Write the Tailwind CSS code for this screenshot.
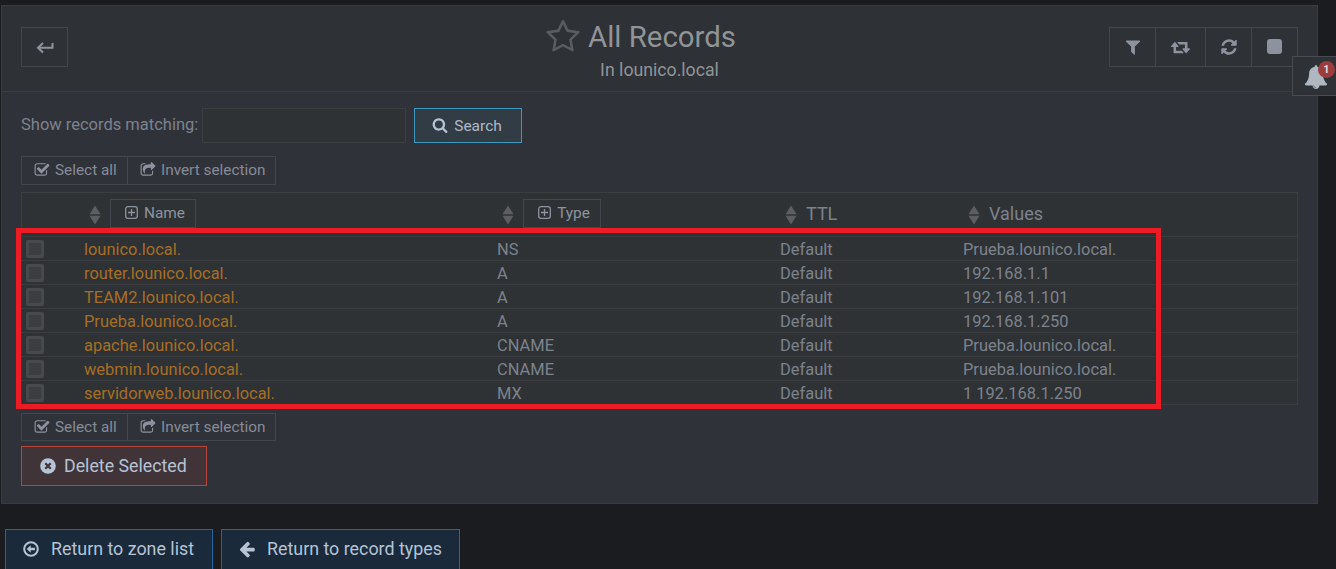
<!DOCTYPE html>
<html lang="en">
<head>
<meta charset="utf-8">
<title>All Records</title>
<script src="https://cdn.jsdelivr.net/npm/@tailwindcss/browser@4"></script>
</head>
<body class="relative h-[569px] w-[1336px] overflow-hidden bg-[#1b1c1f] font-['Roboto',sans-serif] text-[#7c828c]">
<svg class="hidden">
  <symbol id="filter" viewBox="0 0 1792 1792"><path d="M1595 295q17 41-14 70l-493 493v742q0 42-39 59-13 5-25 5-27 0-45-19l-256-256q-19-19-19-45v-486l-493-493q-31-29-14-70 17-39 59-39h1280q42 0 59 39z"/></symbol>
  <symbol id="retweet" viewBox="0 0 1920 1792"><path d="M1280 1504q0 13-9.500 22.500t-22.500 9.500h-960q-8 0-13.500-2t-9-7-5.500-8-3-11.500-1-11.500v-600h-192q-26 0-45-19t-19-45q0-24 15-41l320-384q19-22 49-22t49 22l320 384q15 17 15 41 0 26-19 45t-45 19h-192v384h576q16 0 25 11l160 192q7 10 7 21zm640-416q0 24-15 41l-320 384q-20 23-49 23t-49-23l-320-384q-15-17-15-41 0-26 19-45t45-19h192v-384h-576q-16 0-25-12l-160-192q-7-9-7-20 0-13 9.500-22.500t22.500-9.500h960q8 0 13.500 2t9 7 5.500 8 3 11.500 1 11.500v600h192q26 0 45 19t19 45z"/></symbol>
  <symbol id="refresh" viewBox="0 0 1792 1792"><path d="M1639 1056q0 5-1 7-64 268-268 434.500t-478 166.500q-146 0-282.500-55t-243.500-157l-129 129q-19 19-45 19t-45-19-19-45v-448q0-26 19-45t45-19h448q26 0 45 19t19 45-19 45l-137 137q71 66 161 102t187 36q134 0 250-65t186-179q11-17 53-117 8-23 30-23h192q13 0 22.500 9.500t9.500 22.500zm25-800v448q0 26-19 45t-45 19h-448q-26 0-45-19t-19-45 19-45l138-138q-148-137-349-137-134 0-250 65t-186 179q-11 17-53 117-8 23-30 23h-199q-13 0-22.500-9.500t-9.500-22.500v-7q65-268 270-434.500t480-166.500q146 0 284 55.500t245 156.500l130-129q19-19 45-19t45 19 19 45z"/></symbol>
  <symbol id="search" viewBox="0 0 1792 1792"><path d="M1216 832q0-185-131.500-316.500t-316.500-131.500-316.500 131.500-131.500 316.500 131.500 316.500 316.500 131.500 316.500-131.500 131.500-316.500zm512 832q0 52-38 90t-90 38q-54 0-90-38l-343-342q-179 124-399 124-143 0-273.500-55.500t-225-150-150-225-55.500-273.500 55.500-273.500 150-225 225-150 273.500-55.500 273.500 55.500 225 150 150 225 55.500 273.500q0 220-124 399l343 343q37 37 37 90z"/></symbol>
  <symbol id="check" viewBox="0 0 1792 1792"><path d="M1472 930v318q0 119-84.500 203.500t-203.500 84.500h-832q-119 0-203.500-84.500t-84.500-203.500v-832q0-119 84.500-203.500t203.500-84.500h832q63 0 117 25 15 7 18 23 3 17-9 29l-49 49q-10 10-23 10-3 0-9-2-23-6-45-6h-832q-66 0-113 47t-47 113v832q0 66 47 113t113 47h832q66 0 113-47t47-113v-254q0-13 9-22l64-64q10-10 23-10 6 0 12 3 20 8 20 29zm231-489l-814 814q-24 24-57 24t-57-24l-430-430q-24-24-24-57t24-57l110-110q24-24 57-24t57 24l263 263 647-647q24-24 57-24t57 24l110 110q24 24 24 57t-24 57z"/></symbol>
  <symbol id="share" viewBox="0 0 1792 1792"><path d="M1472 989v259q0 119-84.500 203.500t-203.500 84.500h-832q-119 0-203.500-84.500t-84.500-203.500v-832q0-119 84.500-203.500t203.500-84.500h255q13 0 22.500 9.500t9.500 22.500q0 27-26 32-77 26-133 60-10 4-16 4h-112q-66 0-113 47t-47 113v832q0 66 47 113t113 47h832q66 0 113-47t47-113v-214q0-19 18-29 28-13 54-37 16-16 35-8 21 9 21 29zm237-496l-384 384q-18 19-45 19-12 0-25-5-39-17-39-59v-192h-160q-323 0-438 131-119 137-74 473 3 23-20 34-8 2-12 2-16 0-26-13-10-14-21-31t-39.500-68.500-49.500-99.500-38.500-114-17.500-122q0-49 3.500-91t14-90 28-88 47-81.500 68.500-74 94.500-61.500 124.500-48.500 159.500-30.500 196.500-11h160v-192q0-42 39-59 13-5 25-5 26 0 45 19l384 384q19 19 19 45t-19 45z"/></symbol>
  <symbol id="star" viewBox="0 0 1792 1792"><path d="M1201 1004l306-297-422-62-189-382-189 382-422 62 306 297-73 421 378-199 377 199zm527-357q0 22-26 48l-363 354 86 500q1 7 1 20 0 50-41 50-19 0-40-12l-449-236-449 236q-22 12-40 12-21 0-31.500-14.500t-10.500-35.500q0-6 2-20l86-500-364-354q-25-27-25-48 0-37 56-46l502-73 225-455q19-41 49-41t49 41l225 455 502 73q56 9 56 46z"/></symbol>
  <symbol id="left" viewBox="0 0 1792 1792"><path d="M1664 896v128q0 53-32.500 90.500t-84.500 37.500h-704l293 294q38 36 38 90t-38 90l-75 76q-37 37-90 37-52 0-91-37l-651-652q-37-37-37-90 0-52 37-91l651-650q38-38 91-38 52 0 90 38l75 74q38 38 38 91t-38 91l-293 293h704q52 0 84.500 37.500t32.500 90.500z"/></symbol>
  <symbol id="bell" viewBox="0 0 1792 1792"><path d="M912 1696q0-16-16-16-59 0-101.500-42.500t-42.500-101.500q0-16-16-16t-16 16q0 73 51.500 124.500t124.500 51.500q16 0 16-16zm816-288q0 52-38 90t-90 38h-448q0 106-75 181t-181 75-181-75-75-181h-448q-52 0-90-38t-38-90q50-42 91-88t85-119.500 74.500-158.500 50-206 19.500-260q0-152 117-282.500t307-158.500q-8-19-8-39 0-40 28-68t68-28 68 28 28 68q0 20-8 39 190 28 307 158.500t117 282.500q0 139 19.500 260t50 206 74.500 158.500 85 119.500 91 88z"/></symbol>
  <symbol id="plus" viewBox="0 0 13 13"><path d="M3 .7h7a2.300 2.300 0 0 1 2.300 2.300v7a2.300 2.300 0 0 1-2.300 2.300H3A2.300 2.300 0 0 1 .7 10V3A2.300 2.300 0 0 1 3 .7zM6.500 3v7M3 6.500h7" fill="none" stroke="currentColor" stroke-width="1.300"/></symbol>
  <symbol id="sort" viewBox="0 0 12 20"><path d="M6 .5 11.500 9.200H.5zM6 19.500 11.500 10.800H.5z"/></symbol>
</svg>

<main class="ml-px mt-[5px] h-[499px] w-[1317px] border border-[#3b3c3f] bg-[#30323a]">
  <header class="flex h-[86px] justify-between border-b border-[#3b3c3f] bg-[#2e3135] pl-[19px] pr-[19px] pt-[21px]">
    <div class="w-[189px]">
      <button class="flex h-10 w-[47px] items-center justify-center border border-[#43464b] text-[#8d939e]">
        <svg class="mt-px h-[12px] w-[18px]" viewBox="0 0 18 12" fill="none" stroke="currentColor" stroke-width="2"><path d="M16.500 1v4.700H2M7 1 2 5.700l5 4.700"/></svg>
      </button>
    </div>
    <div class="-mt-[21px] flex flex-col items-center pt-[12px]">
      <h1 class="mr-[38px] flex h-[38px] items-center text-[29.4px] text-[#919497]">
        <svg class="mr-[7px] h-[36px] w-[36px] fill-[#595c60]"><use href="#star"/></svg><span>All Records</span>
      </h1>
      <p class="mt-[2px] text-[17.7px] leading-[25px] text-[#919497]"><span>In lounico.local</span></p>
    </div>
    <div class="flex h-10 w-[189px] border border-[#43464b] fill-[#8d939e] text-[#8d939e]">
      <div class="flex w-[46px] items-center justify-center border-r border-[#43464b]"><svg class="h-[18px] w-[18px]"><use href="#filter"/></svg></div>
      <div class="flex w-[50px] items-center justify-center border-r border-[#43464b]"><svg class="h-[18px] w-[19px]"><use href="#retweet"/></svg></div>
      <div class="flex w-[46px] items-center justify-center border-r border-[#43464b]"><svg class="-mt-px h-[18px] w-[18px]"><use href="#refresh"/></svg></div>
      <div class="flex grow items-center justify-center"><i class="-mt-px h-[15px] w-[15px] rounded-[3px] bg-[#8d939e]"></i></div>
    </div>
  </header>

  <section class="px-[19px] pt-[16px]">
    <div class="flex h-[35px] items-center">
      <label class="w-[181px] whitespace-nowrap text-[16.5px]"><span>Show records matching:</span></label>
      <div class="h-[35px] w-[204px] border border-[#3b3d40] bg-[#2f3235]"></div>
      <button class="ml-[8px] flex h-[35px] w-[108px] items-center justify-center border border-[#3a9bbe] bg-[#313c45] pr-[2px] text-[15.5px] text-[#aeb9c8]"><svg class="-mt-[2px] mr-[6px] h-4 w-4 fill-[#b5c3d5]"><use href="#search"/></svg><span class="pt-[2px]">Search</span></button>
    </div>

    <div class="mt-[13px] flex h-[29px] w-[255px] border border-[#43454f] fill-[#8d939e] text-[15.35px] text-[#868b95]">
      <div class="flex w-[106px] items-center border-r border-[#43454f] pl-[12px]"><svg class="-mt-[2px] mr-[5px] h-4 w-4"><use href="#check"/></svg><span>Select all</span></div>
      <div class="flex items-center pl-[12px]"><svg class="-mt-[2px] mr-[5px] h-4 w-4"><use href="#share"/></svg><span>Invert selection</span></div>
    </div>

    <div class="mt-[7px] h-[213px] w-[1277px] border border-[#3b3d40] bg-[#2f3235]">
      <div class="grid h-[43px] grid-cols-[413px_283px_183px_1fr] items-center text-lg">
        <div class="flex items-center pl-[67px]"><svg class="mr-[9px] h-5 w-3 fill-[#5c5e61]"><use href="#sort"/></svg>
          <div class="-mt-[3px] flex h-[29px] w-[86px] items-center justify-center border border-[#43454f] pl-[4px] text-[15.4px] text-[#8d939e]"><svg class="-mt-[2px] mr-[6px] h-[13px] w-[13px]"><use href="#plus"/></svg><span class="pt-[2px]">Name</span></div></div>
        <div class="flex items-center pl-[67px]"><svg class="mr-[9px] h-5 w-3 fill-[#5c5e61]"><use href="#sort"/></svg>
          <div class="-mt-[3px] flex h-[29px] w-[78px] items-center justify-center border border-[#43454f] pl-[4px] text-[15.4px] text-[#8d939e]"><svg class="-mt-[2px] mr-[6px] h-[13px] w-[13px]"><use href="#plus"/></svg><span class="pt-[2px]">Type</span></div></div>
        <div class="-mt-px flex items-center pl-[67px]"><svg class="mr-[9px] mt-[2px] h-5 w-3 fill-[#5c5e61]"><use href="#sort"/></svg><span>TTL</span></div>
        <div class="-mt-px flex items-center pl-[67px]"><svg class="mr-[9px] mt-[2px] h-5 w-3 fill-[#5c5e61]"><use href="#sort"/></svg><span>Values</span></div>
      </div>
      <div id="rows"></div>
    </div>

    <div class="mt-[8px] flex h-[28px] w-[255px] border border-[#43454f] fill-[#8d939e] text-[15.35px] text-[#868b95]">
      <div class="flex w-[106px] items-center border-r border-[#43454f] pl-[12px]"><svg class="-mt-px mr-[5px] h-4 w-4"><use href="#check"/></svg><span class="pt-px">Select all</span></div>
      <div class="flex items-center pl-[12px]"><svg class="-mt-px mr-[5px] h-4 w-4"><use href="#share"/></svg><span class="pt-px">Invert selection</span></div>
    </div>
    <button class="mt-[5px] flex h-10 w-[186px] items-center border border-[#b5463a] bg-[#403438] pl-[18px] text-[17.8px] text-[#b5c3d5]"><svg class="mr-[8px] h-4 w-4" viewBox="0 0 16 16"><circle cx="8" cy="8" r="7.800" fill="#b5c3d5"/><path d="m5.300 5.300 5.400 5.400m0-5.400-5.400 5.400" stroke="#403438" stroke-width="2.200"/></svg><span>Delete Selected</span></button>
  </section>
</main>

<footer class="ml-[5px] mt-[25px] flex gap-2 text-[17.85px] text-[#b5c3d5]">
  <button class="flex h-[42px] w-[208px] items-center border border-[#1c66a5] bg-[#1a2a3b] pb-[2px] pl-[17px]"><svg class="mr-[12px] h-4 w-4" viewBox="0 0 16 16"><circle cx="8" cy="8" r="6.800" fill="none" stroke="#b5c3d5" stroke-width="2"/><path d="M3.700 8 7.700 4.200v2.600H12v2.400H7.700v2.600z" fill="#b5c3d5"/></svg><span>Return to zone list</span></button>
  <button class="flex h-[42px] w-[239px] items-center border border-[#1c66a5] bg-[#1a2a3b] pb-[2px] pl-[16px]"><svg class="mr-[11px] h-[18px] w-[18px] fill-[#b5c3d5]"><use href="#left"/></svg><span>Return to record types</span></button>
</footer>

<div class="absolute left-[16px] top-[228px] h-[181px] w-[1145px] border-[5px] border-[#ed1c24]"></div>

<aside class="absolute left-[1292px] top-[56px] h-10 w-[50px] border border-[#484b50] bg-[#2e3135]">
  <svg class="absolute left-[11px] top-[8px] h-6 w-6 fill-[#afb7c0]"><use href="#bell"/></svg>
  <b class="absolute left-[25px] top-[4px] flex h-[17px] w-[17px] items-center justify-center rounded-full bg-[#9c3d3d] pt-px text-[11px] text-[#d8dbe0]">1</b>
</aside>

<script>
const records = [
  ['lounico.local.', 'NS', 'Prueba.lounico.local.'],
  ['router.lounico.local.', 'A', '192.168.1.1'],
  ['TEAM2.lounico.local.', 'A', '192.168.1.101'],
  ['Prueba.lounico.local.', 'A', '192.168.1.250'],
  ['apache.lounico.local.', 'CNAME', 'Prueba.lounico.local.'],
  ['webmin.lounico.local.', 'CNAME', 'Prueba.lounico.local.'],
  ['servidorweb.lounico.local.', 'MX', '1 192.168.1.250'],
];
document.getElementById('rows').innerHTML = records.map(([name, type, value]) => `
  <div class="grid h-6 grid-cols-[62px_413px_283px_183px_1fr] items-center border-t border-[#3b3d40] text-[16.45px] leading-[21px]">
    <i class="ml-[4px] h-[18px] w-[18px] rounded-[2px] border-[3px] border-[#47494c] bg-[#3b3d40]"></i>
    <span class="pt-[2px] text-[#a66e25]">${name}</span><span class="pt-[2px]">${type}</span><span class="pt-[2px]">Default</span><span class="pt-[2px]">${value}</span>
  </div>`).join('');
</script>
</body>
</html>
